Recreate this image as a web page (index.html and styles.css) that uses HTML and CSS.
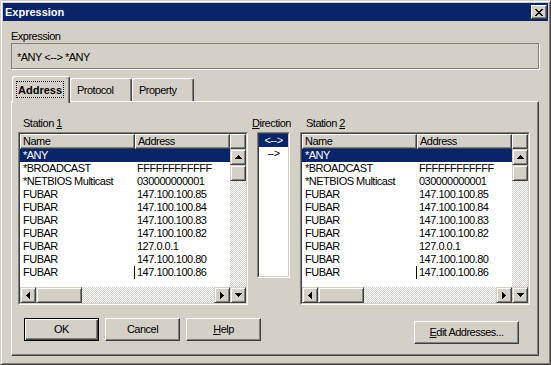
FILE: index.html
```html
<!DOCTYPE html>
<html>
<head>
	<title>Expression</title>
	<meta charset="utf-8">
	<link rel="stylesheet" href="styles.css">
</head>
<body>
<div class="window">
	<div class="titlebar">
		<span class="title">Expression</span>
		<div class="closebtn"><svg width="8" height="7" viewBox="0 0 8 7"><path d="M0 0h2v1H0zM6 0h2v1H6zM1 1h2v1H1zM5 1h2v1H5zM2 2h4v1H2zM3 3h2v1H3zM2 4h4v1H2zM1 5h2v1H1zM5 5h2v1H5zM0 6h2v1H0zM6 6h2v1H6z"/></svg></div>
	</div>
	<div class="client">
		<div class="caption">Expression</div>
		<div class="exprbox">*ANY &lt;--&gt; *ANY</div>

		<div class="tabs">
			<div class="tab active"><span class="focus">Address</span></div>
			<div class="tab">Protocol</div>
			<div class="tab">Property</div>
		</div>

		<div class="panel">
			<div class="stations">
				<div class="station">
					<div class="caption st">Station <u>1</u></div>
					<div class="listbox">
						<div class="listview">
							<div class="header">
								<div class="hcell name">Name</div>
								<div class="hcell">Address</div>
							</div>
							<div class="hcell corner"></div>
							<div class="rows">
								<div class="row sel"><span class="c1">*ANY</span><span class="c2"></span></div>
								<div class="row"><span class="c1">*BROADCAST</span><span class="c2">FFFFFFFFFFFF</span></div>
								<div class="row"><span class="c1">*NETBIOS Multicast</span><span class="c2">030000000001</span></div>
								<div class="row"><span class="c1">FUBAR</span><span class="c2">147.100.100.85</span></div>
								<div class="row"><span class="c1">FUBAR</span><span class="c2">147.100.100.84</span></div>
								<div class="row"><span class="c1">FUBAR</span><span class="c2">147.100.100.83</span></div>
								<div class="row"><span class="c1">FUBAR</span><span class="c2">147.100.100.82</span></div>
								<div class="row"><span class="c1">FUBAR</span><span class="c2">127.0.0.1</span></div>
								<div class="row"><span class="c1">FUBAR</span><span class="c2">147.100.100.80</span></div>
								<div class="row mark"><span class="c1">FUBAR</span><span class="c2">147.100.100.86</span></div>
							</div>
							<div class="vscroll">
								<div class="sbtn"><svg width="7" height="4" viewBox="0 0 7 4"><path d="M3 0h1v1H3zM2 1h3v1H2zM1 2h5v1H1zM0 3h7v1H0z"/></svg></div>
								<div class="thumb v"></div>
								<div class="track"></div>
								<div class="sbtn"><svg width="7" height="4" viewBox="0 0 7 4"><path d="M0 0h7v1H0zM1 1h5v1H1zM2 2h3v1H2zM3 3h1v1H3z"/></svg></div>
							</div>
							<div class="hscroll">
								<div class="sbtn"><svg width="4" height="7" viewBox="0 0 4 7"><path d="M0 3h1v1H0zM1 2h1v3H1zM2 1h1v5H2zM3 0h1v7H3z"/></svg></div>
								<div class="thumb h"></div>
								<div class="track"></div>
								<div class="sbtn"><svg width="4" height="7" viewBox="0 0 4 7"><path d="M0 0h1v7H0zM1 1h1v5H1zM2 2h1v3H2zM3 3h1v1H3z"/></svg></div>
							</div>
						</div>
					</div>
				</div>

				<div class="direction">
					<div class="caption dir"><u>D</u>irection</div>
					<div class="dirbox">
						<div class="dirlist">
							<div class="diritem sel">&lt;--&gt;</div>
							<div class="diritem">--&gt;</div>
						</div>
					</div>
				</div>

				<div class="station second">
					<div class="caption st2">Station <u>2</u></div>
					<div class="listbox">
						<div class="listview">
							<div class="header">
								<div class="hcell name">Name</div>
								<div class="hcell">Address</div>
							</div>
							<div class="hcell corner"></div>
							<div class="rows">
								<div class="row sel"><span class="c1">*ANY</span><span class="c2"></span></div>
								<div class="row"><span class="c1">*BROADCAST</span><span class="c2">FFFFFFFFFFFF</span></div>
								<div class="row"><span class="c1">*NETBIOS Multicast</span><span class="c2">030000000001</span></div>
								<div class="row"><span class="c1">FUBAR</span><span class="c2">147.100.100.85</span></div>
								<div class="row"><span class="c1">FUBAR</span><span class="c2">147.100.100.84</span></div>
								<div class="row"><span class="c1">FUBAR</span><span class="c2">147.100.100.83</span></div>
								<div class="row"><span class="c1">FUBAR</span><span class="c2">147.100.100.82</span></div>
								<div class="row"><span class="c1">FUBAR</span><span class="c2">127.0.0.1</span></div>
								<div class="row"><span class="c1">FUBAR</span><span class="c2">147.100.100.80</span></div>
								<div class="row mark"><span class="c1">FUBAR</span><span class="c2">147.100.100.86</span></div>
							</div>
							<div class="vscroll">
								<div class="sbtn"><svg width="7" height="4" viewBox="0 0 7 4"><path d="M3 0h1v1H3zM2 1h3v1H2zM1 2h5v1H1zM0 3h7v1H0z"/></svg></div>
								<div class="thumb v"></div>
								<div class="track"></div>
								<div class="sbtn"><svg width="7" height="4" viewBox="0 0 7 4"><path d="M0 0h7v1H0zM1 1h5v1H1zM2 2h3v1H2zM3 3h1v1H3z"/></svg></div>
							</div>
							<div class="hscroll">
								<div class="sbtn"><svg width="4" height="7" viewBox="0 0 4 7"><path d="M0 3h1v1H0zM1 2h1v3H1zM2 1h1v5H2zM3 0h1v7H3z"/></svg></div>
								<div class="thumb h"></div>
								<div class="track"></div>
								<div class="sbtn"><svg width="4" height="7" viewBox="0 0 4 7"><path d="M0 0h1v7H0zM1 1h1v5H1zM2 2h1v3H2zM3 3h1v1H3z"/></svg></div>
							</div>
						</div>
					</div>
				</div>
			</div>

			<div class="buttons">
				<div class="btngroup">
					<div class="button default">OK</div>
					<div class="button">Cancel</div>
					<div class="button"><u>H</u>elp</div>
				</div>
				<div class="button wide"><u>E</u>dit Addresses...</div>
			</div>
		</div>
	</div>
</div>
</body>
</html>
```

FILE: styles.css
```css
body {
	margin: 0;
	background-color: #D4D0C8;
	font-family: "Liberation Sans", Arial, sans-serif;
	font-size: 11px;
	line-height: 13px;
	letter-spacing: -0.5px;
	color: #000;
}
u {
	text-decoration: underline;
	text-underline-offset: 1px;
}
.window {
	width: 551px;
	height: 365px;
	box-sizing: border-box;
	background-color: #D4D0C8;
	border: 1px solid;
	border-color: #D4D0C8 #404040 #404040 #D4D0C8;
	box-shadow: inset 1px 1px #fff, inset -1px -1px #808080;
	padding: 2px;
}
.titlebar {
	height: 18px;
	background-color: #0A246A;
	display: flex;
	align-items: center;
	justify-content: space-between;
	padding-left: 2px;
}
.title {
	color: #fff;
	font-weight: bold;
	letter-spacing: 0;
	line-height: 18px;
}
.closebtn {
	width: 16px;
	height: 14px;
	box-sizing: border-box;
	margin-right: 1px;
	background-color: #D4D0C8;
	border: 1px solid;
	border-color: #fff #404040 #404040 #fff;
	box-shadow: inset -1px -1px #808080;
	display: flex;
	align-items: center;
	justify-content: center;
	padding-right: 1px;
}
.closebtn svg {
	display: block;
}

.client {
	padding: 9px 9px 0 8px;
}
.exprbox {
	height: 26px;
	box-sizing: border-box;
	border: 1px solid #808080;
	box-shadow: 1px 1px 0 #fff;
	padding: 7px 0 0 5px;
}

/* tabs */
.tabs {
	display: flex;
	align-items: flex-end;
	height: 25px;
	margin-top: 7px;
	padding-left: 1px;
}
.tab {
	height: 23px;
	box-sizing: border-box;
	width: 62px;
	border: 1px solid;
	border-bottom: none;
	border-color: #fff #404040 #404040 #fff;
	border-radius: 3px 3px 0 0;
	box-shadow: inset -1px 0 #808080;
	padding: 5px 0 0 6px;
	background-color: #D4D0C8;
}
.tab.active {
	width: 58px;
	height: 27px;
	margin-bottom: -2px;
	padding: 4px 0 0 3px;
	position: relative;
	z-index: 1;
	font-weight: bold;
	letter-spacing: 0;
}
.focus {
	display: inline-block;
	border: 1px dotted #000;
	padding: 2px 1px 0;
	line-height: 13px;
}

.panel {
	height: 255px;
	box-sizing: border-box;
	border: 1px solid;
	border-color: #fff #404040 #404040 #fff;
	box-shadow: inset -1px -1px #808080;
	padding: 15px 8px 0 6px;
}
.stations {
	display: flex;
	align-items: flex-start;
}
.station {
	width: 230px;
}
.station.second {
	margin-left: 10px;
}
.stations .caption {
	margin-bottom: 2px;
	white-space: nowrap;
}
.caption.st {
	padding-left: 5px;
}
.caption.st2 {
	padding-left: 6px;
}
.caption.dir {
	margin-left: -5px;
}
.direction {
	width: 33px;
	margin-left: 9px;
}

/* list view */
.listbox {
	height: 173px;
	box-sizing: border-box;
	border: 1px solid;
	border-color: #808080 #fff #fff #808080;
}
.listview {
	height: 100%;
	box-sizing: border-box;
	border: 1px solid;
	border-color: #404040 #D4D0C8 #D4D0C8 #404040;
	display: grid;
	grid-template-columns: 1fr 16px;
	grid-template-rows: 15px 1fr 16px;
	overflow: hidden;
}
.header {
	display: flex;
}
.hcell {
	flex: 1;
	height: 15px;
	box-sizing: border-box;
	background-color: #D4D0C8;
	border: 1px solid;
	border-color: #fff #404040 #404040 #fff;
	box-shadow: inset -1px -1px #808080;
	padding-left: 2px;
	white-space: nowrap;
}
.hcell.name {
	flex: none;
	width: 115px;
}
.hcell.corner {
	padding: 0;
}
.rows {
	background-color: #fff;
	overflow: hidden;
}
.row {
	display: flex;
	height: 13px;
	white-space: nowrap;
}
.row.sel {
	background-color: #0A246A;
	color: #fff;
}
.c1 {
	width: 115px;
	flex: none;
	padding-left: 3px;
	box-sizing: border-box;
}
.c2 {
	flex: 1;
	padding-left: 2px;
}
/* leftover line of a column drag */
.row.mark .c1 {
	box-shadow: inset -1px 0 #000;
}
.vscroll {
	grid-column: 2;
	grid-row: 2 / 4;
	display: flex;
	flex-direction: column;
}
.hscroll {
	grid-column: 1;
	grid-row: 3;
	display: flex;
}
.sbtn, .thumb {
	box-sizing: border-box;
	background-color: #D4D0C8;
	border: 1px solid;
	border-color: #D4D0C8 #404040 #404040 #D4D0C8;
	box-shadow: inset 1px 1px #fff, inset -1px -1px #808080;
}
.sbtn {
	width: 16px;
	height: 16px;
	flex: none;
	display: flex;
	align-items: center;
	justify-content: center;
}
.sbtn svg {
	display: block;
}
.thumb.v {
	height: 16px;
	flex: none;
}
.thumb.h {
	width: 46px;
	flex: none;
}
.track {
	flex: 1;
	background-image: repeating-conic-gradient(#fff 0 25%, #D4D0C8 0 50%);
	background-size: 2px 2px;
}

/* direction list */
.dirbox {
	height: 146px;
	box-sizing: border-box;
	border: 1px solid;
	border-color: #808080 #fff #fff #808080;
}
.dirlist {
	height: 100%;
	box-sizing: border-box;
	border: 1px solid;
	border-color: #404040 #D4D0C8 #D4D0C8 #404040;
	background-color: #fff;
}
.diritem {
	height: 13px;
	text-align: center;
}
.diritem.sel {
	background-color: #0A246A;
	color: #fff;
}

/* buttons */
.buttons {
	display: flex;
	justify-content: space-between;
	align-items: flex-start;
	margin-top: 13px;
	padding: 0 11px 0 6px;
}
.btngroup {
	display: flex;
	gap: 6px;
}
.button {
	width: 75px;
	height: 23px;
	box-sizing: border-box;
	border: 1px solid;
	border-color: #fff #404040 #404040 #fff;
	box-shadow: inset -1px -1px #808080;
	text-align: center;
	line-height: 20px;
}
.button.default {
	border-color: #000;
	box-shadow: inset 1px 1px #fff, inset -1px -1px #404040, inset -2px -2px #808080;
}
.button.wide {
	width: 105px;
	margin-top: 3px;
}
```
